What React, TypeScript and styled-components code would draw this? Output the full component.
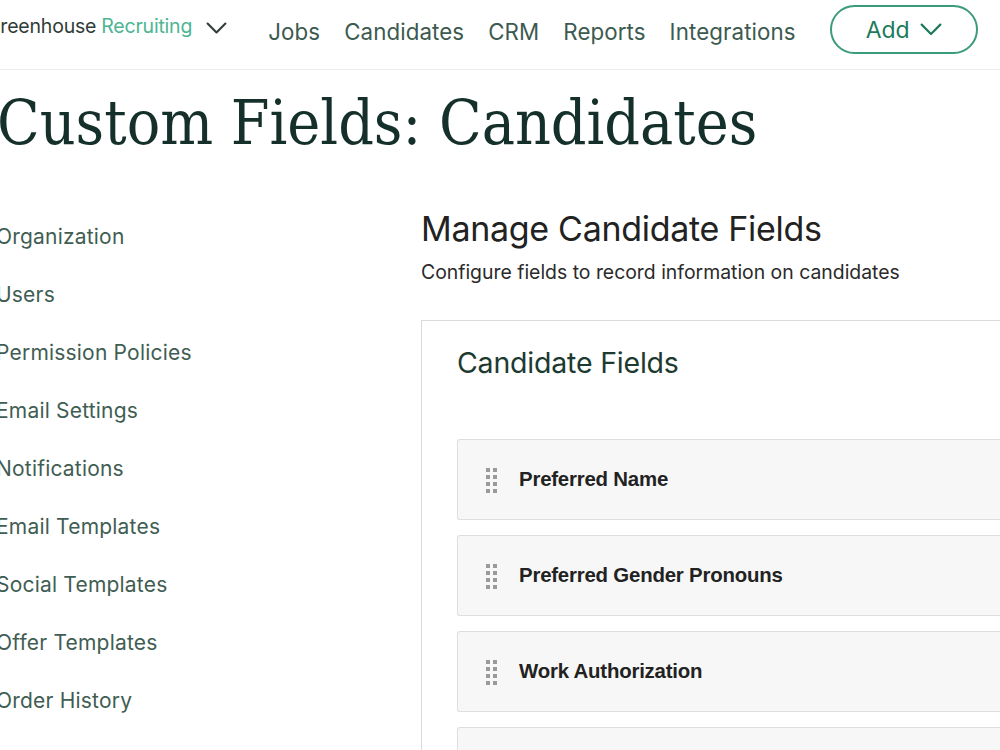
import React from 'react'
import styled, { createGlobalStyle } from 'styled-components'

const GlobalStyle = createGlobalStyle`
  html, body {
    margin: 0;
    padding: 0;
    background: #ffffff;
    overflow: hidden;
  }
  body {
    font-family: Inter, 'Liberation Sans', sans-serif;
  }
`

const Page = styled.div`
  width: 1120px;
  margin-left: -16px;
`

const TopBar = styled.header`
  height: 69px;
  border-bottom: 1px solid #ececec;
  display: flex;
  align-items: center;
  padding-left: 2px;
`

const Logo = styled.div`
  display: flex;
  align-items: center;
  font-size: 19.5px;
  letter-spacing: -0.2px;
  margin-top: -17px;
  color: #2f3b36;
`

const LogoAccent = styled.span`
  color: #4db592;
  margin-left: 5px;
`

const LogoCaret = styled.span`
  display: flex;
  margin-left: 14px;
  margin-top: 4px;
`

const NavLinks = styled.nav`
  display: flex;
  gap: 24px;
  margin-left: 41px;
  margin-top: -7px;
`

const NavLink = styled.a`
  font-size: 22.3px;
  color: #3c5a4f;
  text-decoration: none;
  letter-spacing: 0.1px;
`

const AddButton = styled.button`
  margin-left: 34px;
  width: 148px;
  height: 49px;
  margin-top: -10px;
  border: 2px solid #3b9b7d;
  border-radius: 25px;
  background: #fff;
  color: #1e7a5b;
  font-family: Inter, 'Liberation Sans', sans-serif;
  font-size: 23px;
  display: flex;
  align-items: center;
  justify-content: center;
  gap: 10px;
`

const Title = styled.h1`
  margin: 0;
  padding: 10px 0 0 13px;
  height: 100px;
  font-family: 'DejaVu Serif Condensed', 'DejaVu Serif', serif;
  font-weight: 400;
  font-size: 62px;
  line-height: 86px;
  color: #15302a;
`

const Columns = styled.div`
  display: grid;
  grid-template-columns: 437px 1fr;
`

const SideNav = styled.ul`
  list-style: none;
  margin: 0;
  padding: 45px 0 0 12px;
  display: flex;
  flex-direction: column;
  gap: 34px;
`

const SideItem = styled.li`
  font-size: 21px;
  line-height: 24px;
  color: #3f5d52;
  letter-spacing: 0.2px;
`

const Main = styled.section`
  padding-top: 30px;
`

const SectionTitle = styled.h2`
  margin: 0;
  font-family: Inter, 'Liberation Sans', sans-serif;
  font-weight: 400;
  font-size: 34px;
  line-height: 38px;
  color: #222;
  letter-spacing: -0.3px;
`

const SectionHint = styled.p`
  margin: 13px 0 0;
  font-size: 19.4px;
  line-height: 23px;
  color: #2a2a2a;
`

const Card = styled.div`
  margin-top: 36px;
  border: 1px solid #dadada;
  border-right: none;
  padding: 25px 0 0 35px;
`

const CardTitle = styled.h3`
  margin: 0;
  font-weight: 400;
  font-size: 28.5px;
  line-height: 34px;
  color: #1d3a31;
  letter-spacing: -0.2px;
`

const FieldList = styled.div`
  margin-top: 59px;
  display: flex;
  flex-direction: column;
  gap: 15px;
`

const FieldRow = styled.div`
  height: 79px;
  background: #f7f7f7;
  border: 1px solid #dedede;
  border-right: none;
  border-radius: 3px 0 0 3px;
  display: flex;
  align-items: center;
  padding-left: 27px;
`

const FieldName = styled.span`
  margin-left: 20px;
  font-family: 'Liberation Sans', Arial, sans-serif;
  font-weight: 700;
  font-size: 20.4px;
  letter-spacing: -0.2px;
  color: #222;
`

const Grip = () => (
  <svg width='14' height='26' viewBox='0 0 14 26'>
    {[0, 1, 2, 3].map(r =>
      [0, 1].map(c => (
        <rect key={`${r}-${c}`} x={1 + c * 7} y={1 + r * 7} width='4' height='4' fill='#9a9a9a' />
      ))
    )}
  </svg>
)

const Caret = ({ color, size }: { color: string; size: number }) => (
  <svg width={size} height={size * 0.6} viewBox='0 0 20 12' fill='none'>
    <path d='M1.5 1.5 L10 10 L18.5 1.5' stroke={color} strokeWidth='2' strokeLinecap='round' strokeLinejoin='round' />
  </svg>
)

const navItems = ['Jobs', 'Candidates', 'CRM', 'Reports', 'Integrations']

const settings = [
  'Organization',
  'Users',
  'Permission Policies',
  'Email Settings',
  'Notifications',
  'Email Templates',
  'Social Templates',
  'Offer Templates',
  'Order History'
]

const fields = ['Preferred Name', 'Preferred Gender Pronouns', 'Work Authorization', 'Resume']

function App () {
  return (
    <Page>
      <GlobalStyle />
      <TopBar>
        <Logo>
          Greenhouse<LogoAccent>Recruiting</LogoAccent>
          <LogoCaret>
            <Caret color='#333d39' size={21} />
          </LogoCaret>
        </Logo>
        <NavLinks>
          {navItems.map(item => (
            <NavLink key={item}>{item}</NavLink>
          ))}
        </NavLinks>
        <AddButton>
          Add
          <Caret color='#1e7a5b' size={22} />
        </AddButton>
      </TopBar>
      <Title>Custom Fields: Candidates</Title>
      <Columns>
        <SideNav>
          {settings.map(item => (
            <SideItem key={item}>{item}</SideItem>
          ))}
        </SideNav>
        <Main>
          <SectionTitle>Manage Candidate Fields</SectionTitle>
          <SectionHint>Configure fields to record information on candidates</SectionHint>
          <Card>
            <CardTitle>Candidate Fields</CardTitle>
            <FieldList>
              {fields.map(f => (
                <FieldRow key={f}>
                  <Grip />
                  <FieldName>{f}</FieldName>
                </FieldRow>
              ))}
            </FieldList>
          </Card>
        </Main>
      </Columns>
    </Page>
  )
}

export default App
